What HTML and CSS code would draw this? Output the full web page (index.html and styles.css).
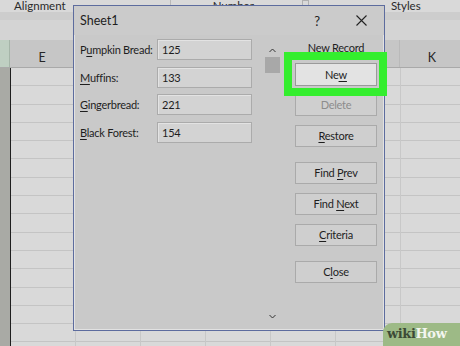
FILE: index.html
```html
<!DOCTYPE html>
<html>
<head>
<meta charset="utf-8">
<link rel="stylesheet" href="styles.css">
</head>
<body>
<div class="screen">
  <div class="ribbon">
    <span class="grp grp-align">Alignment</span>
    <span class="rsep"></span>
    <span class="grp grp-num">Number</span>
    <span class="launcher"></span>
    <span class="grp grp-styles">Styles</span>
  </div>
  <div class="band1"></div>
  <div class="band2"></div>
  <div class="colheads">
    <div class="ch ch-sel"></div>
    <div class="ch">E</div>
    <div class="ch"></div>
    <div class="ch"></div>
    <div class="ch"></div>
    <div class="ch"></div>
    <div class="ch"></div>
    <div class="ch">K</div>
  </div>
  <div class="cells">
    <div class="col col-sel"></div>
    <div class="col"></div>
    <div class="col"></div>
    <div class="col"></div>
    <div class="col"></div>
    <div class="col"></div>
    <div class="col"></div>
    <div class="col"></div>
  </div>

  <div class="dialog">
    <div class="titlebar">
      <span class="title">Sheet1</span>
      <span class="help">?</span>
      <svg class="xbtn" width="11" height="11" viewBox="0 0 11 11"><path d="M0.5 0.5 L10.5 10.5 M10.5 0.5 L0.5 10.5" stroke="#222" stroke-width="1.1" fill="none"/></svg>
    </div>
    <div class="dbody">
      <div class="fields">
        <span class="lbl">P<u>u</u>mpkin Bread:</span><span class="inp">125</span>
        <span class="lbl"><u>M</u>uffins:</span><span class="inp">133</span>
        <span class="lbl"><u>G</u>ingerbread:</span><span class="inp">221</span>
        <span class="lbl"><u>B</u>lack Forest:</span><span class="inp">154</span>
      </div>
      <div class="scroll">
        <svg class="chev" width="7" height="5" viewBox="0 0 7 5"><path d="M0.5 4 L3.5 1 L6.5 4" stroke="#333" stroke-width="1" fill="none"/></svg>
        <div class="thumb"></div>
        <div class="sfill"></div>
        <svg class="chev chev-down" width="7" height="5" viewBox="0 0 7 5"><path d="M0.5 1 L3.5 4 L6.5 1" stroke="#333" stroke-width="1" fill="none"/></svg>
      </div>
      <div class="buttons">
        <div class="rec">New Record</div>
        <div class="btn btn-focus">Ne<u>w</u></div>
        <div class="btn btn-off">Delete</div>
        <div class="btn"><u>R</u>estore</div>
        <div class="btn btn-gap">Find <u>P</u>rev</div>
        <div class="btn">Find <u>N</u>ext</div>
        <div class="btn"><u>C</u>riteria</div>
        <div class="btn btn-gap">C<u>l</u>ose</div>
      </div>
    </div>
  </div>

  <div class="highlight"></div>
  <div class="wikihow"><span class="wk">wiki</span><span class="hw">How</span></div>
</div>
</body>
</html>
```

FILE: styles.css
```css
* { box-sizing: border-box; }
html, body { margin: 0; padding: 0; }
body {
  width: 460px;
  height: 346px;
  overflow: hidden;
  font-family: "Lato", "Open Sans", sans-serif;
  color: #1e1e1e;
}
.screen {
  position: relative;
  width: 460px;
  height: 346px;
  background: #d8d8d8;
  overflow: hidden;
}

/* ribbon */
.ribbon {
  height: 12px;
  background: #d9d9d9;
  display: flex;
  align-items: flex-start;
  font-size: 11.5px;
  line-height: 11px;
  color: #2a2a2a;
  overflow: hidden;
}
.grp { display: block; white-space: nowrap; }
.grp-align { margin-left: 14px; }
.rsep { width: 1px; height: 12px; background: #b9b9b9; margin-left: 104px; }
.grp-num { margin-left: 42px; }
.launcher { width: 7px; height: 7px; border: 1px solid #b0b0b0; margin-left: 48px; }
.grp-styles { margin-left: 82px; }
.band1 { height: 8px; background: #cdcdcd; }
.band2 { height: 20px; background: #d4d4d4; }

.colheads {
  height: 28px;
  display: flex;
  background: #c6c6c6;
  border-bottom: 1px solid #a9a9a9;
}
.ch {
  width: 65px;
  flex: none;
  border-right: 1px solid #b9b9b9;
  text-align: center;
  font-size: 12.5px;
  line-height: 12px;
  padding-top: 12px;
  color: #262626;
}
.ch-sel { width: 10px; background: #bfcfc2; border-right: 1px solid #a5b5a8; }

.cells {
  display: flex;
  height: 278px;
  background: repeating-linear-gradient(to bottom, #d9d9d9 0, #d9d9d9 17.3px, #c4c4c4 17.3px, #c4c4c4 18.3px);
}
.col { width: 65px; flex: none; border-right: 1px solid #c8c8c8; }
.col-sel { width: 11px; background: #a9aaa5; border-right: 1px solid #1e1e1e; }

/* dialog */
.dialog {
  position: absolute;
  left: 73px;
  top: 5px;
  width: 312px;
  height: 326px;
  background: #c9c9c9;
  border: 1px solid #5d6c9e;
  box-shadow: inset 1px 1px 0 #e2e2e2, inset -1px -1px 0 #e2e2e2;
  display: flex;
  flex-direction: column;
  font-size: 11px;
  letter-spacing: -0.25px;
}
.titlebar {
  height: 29px;
  flex: none;
  display: flex;
  align-items: center;
  padding-left: 6px;
  padding-right: 17px;
  background: #cbcbcb;
  letter-spacing: 0;
}
.title { font-size: 12.5px; color: #1e1e1e; flex: 1; }
.help { font-size: 13px; color: #222; }
.xbtn { margin-left: 36px; }

.dbody {
  flex: 1;
  display: flex;
  padding: 4px 0 0 6px;
}
.fields {
  display: grid;
  grid-template-columns: 77px 95px;
  grid-auto-rows: 21px;
  row-gap: 6.7px;
  align-content: start;
  align-items: center;
}
.lbl { white-space: nowrap; color: #1e1e1e; }
.lbl u { text-underline-offset: 2px; }
.inp {
  height: 21px;
  background: #d3d3d3;
  border: 1px solid #ababab;
  box-shadow: inset 1px 1px 0 #e3e3e3;
  padding-left: 4px;
  line-height: 19px;
  color: #1e1e1e;
}

.scroll {
  width: 15px;
  margin-left: 13px;
  display: flex;
  flex-direction: column;
  align-items: center;
  padding-top: 9px;
  padding-bottom: 11px;
}
.thumb { width: 15px; height: 16px; background: #a8a8a8; margin-top: 4px; }
.sfill { flex: 1; }

.buttons {
  margin-left: 15px;
  width: 82px;
  display: flex;
  flex-direction: column;
}
.rec {
  line-height: 14px;
  text-align: center;
  margin-top: 2px;
  margin-bottom: 8px;
  white-space: nowrap;
}
.btn {
  height: 22px;
  margin-bottom: 9px;
  background: #cfcfcf;
  border: 1px solid #aaaaaa;
  text-align: center;
  line-height: 20px;
  color: #1e1e1e;
}
.btn u { text-underline-offset: 2px; }
.btn-focus { height: 23px; margin-bottom: 8px; background: #e3e3e3; border-color: #9a9a9a; line-height: 21px; }
.btn-off { color: #8c8c8c; }
.btn-gap { margin-top: 6px; }

.highlight {
  position: absolute;
  left: 284px;
  top: 52px;
  width: 103px;
  height: 44px;
  border: 8px solid #34ee2e;
}

.wikihow {
  position: absolute;
  left: 383px;
  top: 323px;
  width: 80px;
  height: 24px;
  background: #9dba86;
  border-top-left-radius: 9px;
  font-family: "DejaVu Serif", serif;
  font-weight: bold;
  font-size: 13px;
  line-height: 22px;
  padding-left: 4px;
  letter-spacing: -0.4px;
}
.wk { color: #3c4a36; }
.hw { color: #f3f6ef; }
```
